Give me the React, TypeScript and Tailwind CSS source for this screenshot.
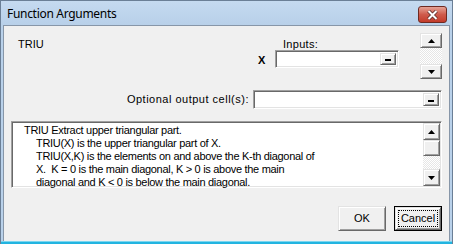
const raised =
  'border border-t-[#e3e3e3] border-l-[#e3e3e3] border-b-[#696969] border-r-[#696969] shadow-[inset_1px_1px_0_#ffffff,inset_-1px_-1px_0_#a0a0a0] bg-[#f0f0f0]';
const sunken =
  'border border-t-[#a0a0a0] border-l-[#a0a0a0] border-b-white border-r-white shadow-[inset_1px_1px_0_#696969,inset_-1px_-1px_0_#e3e3e3] bg-white';
const hatch = 'bg-[repeating-conic-gradient(#ffffff_0_25%,#e6e6e6_0_50%)] bg-[length:2px_2px]';

function Arrow({ up }: { up?: boolean }) {
  return (
    <svg width="7" height="4" viewBox="0 0 7 4">
      <path d={up ? 'M3.5 0 L7 4 L0 4 Z' : 'M0 0 L7 0 L3.5 4 Z'} fill="#000" />
    </svg>
  );
}

function ArrowButton({ up, className = '' }: { up?: boolean; className?: string }) {
  return (
    <div className={`${raised} flex items-center justify-center ${className}`}>
      <Arrow up={up} />
    </div>
  );
}

function RefEdit({ className = '' }: { className?: string }) {
  return (
    <div className={`${sunken} flex justify-end p-[2px] ${className}`}>
      <div className={`${raised} w-[16px] h-full flex items-end justify-center pb-[3px]`}>
        <div className="w-[6px] h-[2px] bg-black" />
      </div>
    </div>
  );
}

export default function App() {
  const lines = [
    'TRIU(X) is the upper triangular part of X.',
    'TRIU(X,K) is the elements on and above the K-th diagonal of',
    'X.  K = 0 is the main diagonal, K > 0 is above the main',
    'diagonal and K < 0 is below the main diagonal.',
  ];

  return (
    <div className="w-[453px] h-[244px] flex flex-col bg-[#b9d1ea] border border-[#6b7f96] border-b-0 font-['Liberation_Sans',sans-serif] text-[11px] text-black">
      {/* Title bar */}
      <div className="h-[24px] flex items-center justify-between pl-[6px] pr-[5px] bg-gradient-to-b from-[#c5daf0] to-[#b8d0e9]">
        <span className="font-['Noto_Sans',sans-serif] text-[12px] tracking-[-0.3px] text-black pt-[1px]">Function Arguments</span>
        <div className="w-[29px] h-[17px] mt-[3px] rounded-[3px] border border-[#6e2a22] bg-gradient-to-b from-[#e4a296] via-[#cf5b4c] to-[#c23b2a] flex items-center justify-center">
          <svg width="11" height="10" viewBox="0 0 11 10">
            <path d="M1.5 1 L9.5 9 M9.5 1 L1.5 9" stroke="#5a2a28" strokeWidth="3.6" />
            <path d="M1.5 1 L9.5 9 M9.5 1 L1.5 9" stroke="#ffffff" strokeWidth="2" />
          </svg>
        </div>
      </div>

      {/* Body */}
      <div className="flex-1 mx-[2px] flex flex-col px-[7px] bg-[#f0f0f0] border-l border-t border-r border-[#8796a8]">
        {/* Top section */}
        <div className="flex mt-[7px] h-[46px]">
          <div className="flex-1 pl-[7px] pt-[3px]">TRIU</div>
          <div className="w-[146px] flex flex-col">
            <div className="pl-[29px] pt-[3px] h-[17px] tracking-[0.3px]">Inputs:</div>
            <div className="flex items-center">
              <span className="font-bold w-[21px] pl-[4px] pt-[2px]">X</span>
              <RefEdit className="w-[124px] h-[18px]" />
            </div>
          </div>
          <div className="w-[20px]" />
          <div className="w-[22px] flex flex-col">
            <ArrowButton up className="h-[15px]" />
            <div className={`flex-1 ${hatch}`} />
            <ArrowButton className="h-[15px]" />
          </div>
        </div>

        {/* Optional output */}
        <div className="flex items-center justify-end mt-[11px] gap-[4px]">
          <span className="tracking-[0.5px]">Optional output cell(s):</span>
          <RefEdit className="w-[189px] h-[19px]" />
        </div>

        {/* Description */}
        <div className={`${sunken} mt-[12px] h-[67px] flex`}>
          <div className="flex-1 pl-[12px] pt-[2px] leading-[13px] whitespace-pre tracking-[-0.3px]">
            <div>TRIU Extract upper triangular part.</div>
            {lines.map((l) => (
              <div key={l} className="pl-[12px]">{l}</div>
            ))}
          </div>
          <div className="w-[17px] flex flex-col py-[1px] mr-[1px]">
            <ArrowButton up className="h-[17px]" />
            <div className={`${raised} h-[16px]`} />
            <div className={`flex-1 ${hatch}`} />
            <ArrowButton className="h-[17px]" />
          </div>
        </div>

        {/* Buttons */}
        <div className="flex justify-end gap-[8px] mt-[18px]">
          <div className={`${raised} w-[48px] h-[25px] flex items-center justify-center`}>OK</div>
          <div className="w-[48px] h-[25px] border border-black">
            <div className={`${raised} w-full h-full flex items-center justify-center p-[2px]`}>
              <div className="w-full h-full border border-dotted border-black flex items-center justify-center">
                Cancel
              </div>
            </div>
          </div>
        </div>
      </div>
      <div className="h-[1px] bg-[#7ad6f0]" />
      <div className="h-[2px] bg-[#22b4e0]" />
    </div>
  );
}
